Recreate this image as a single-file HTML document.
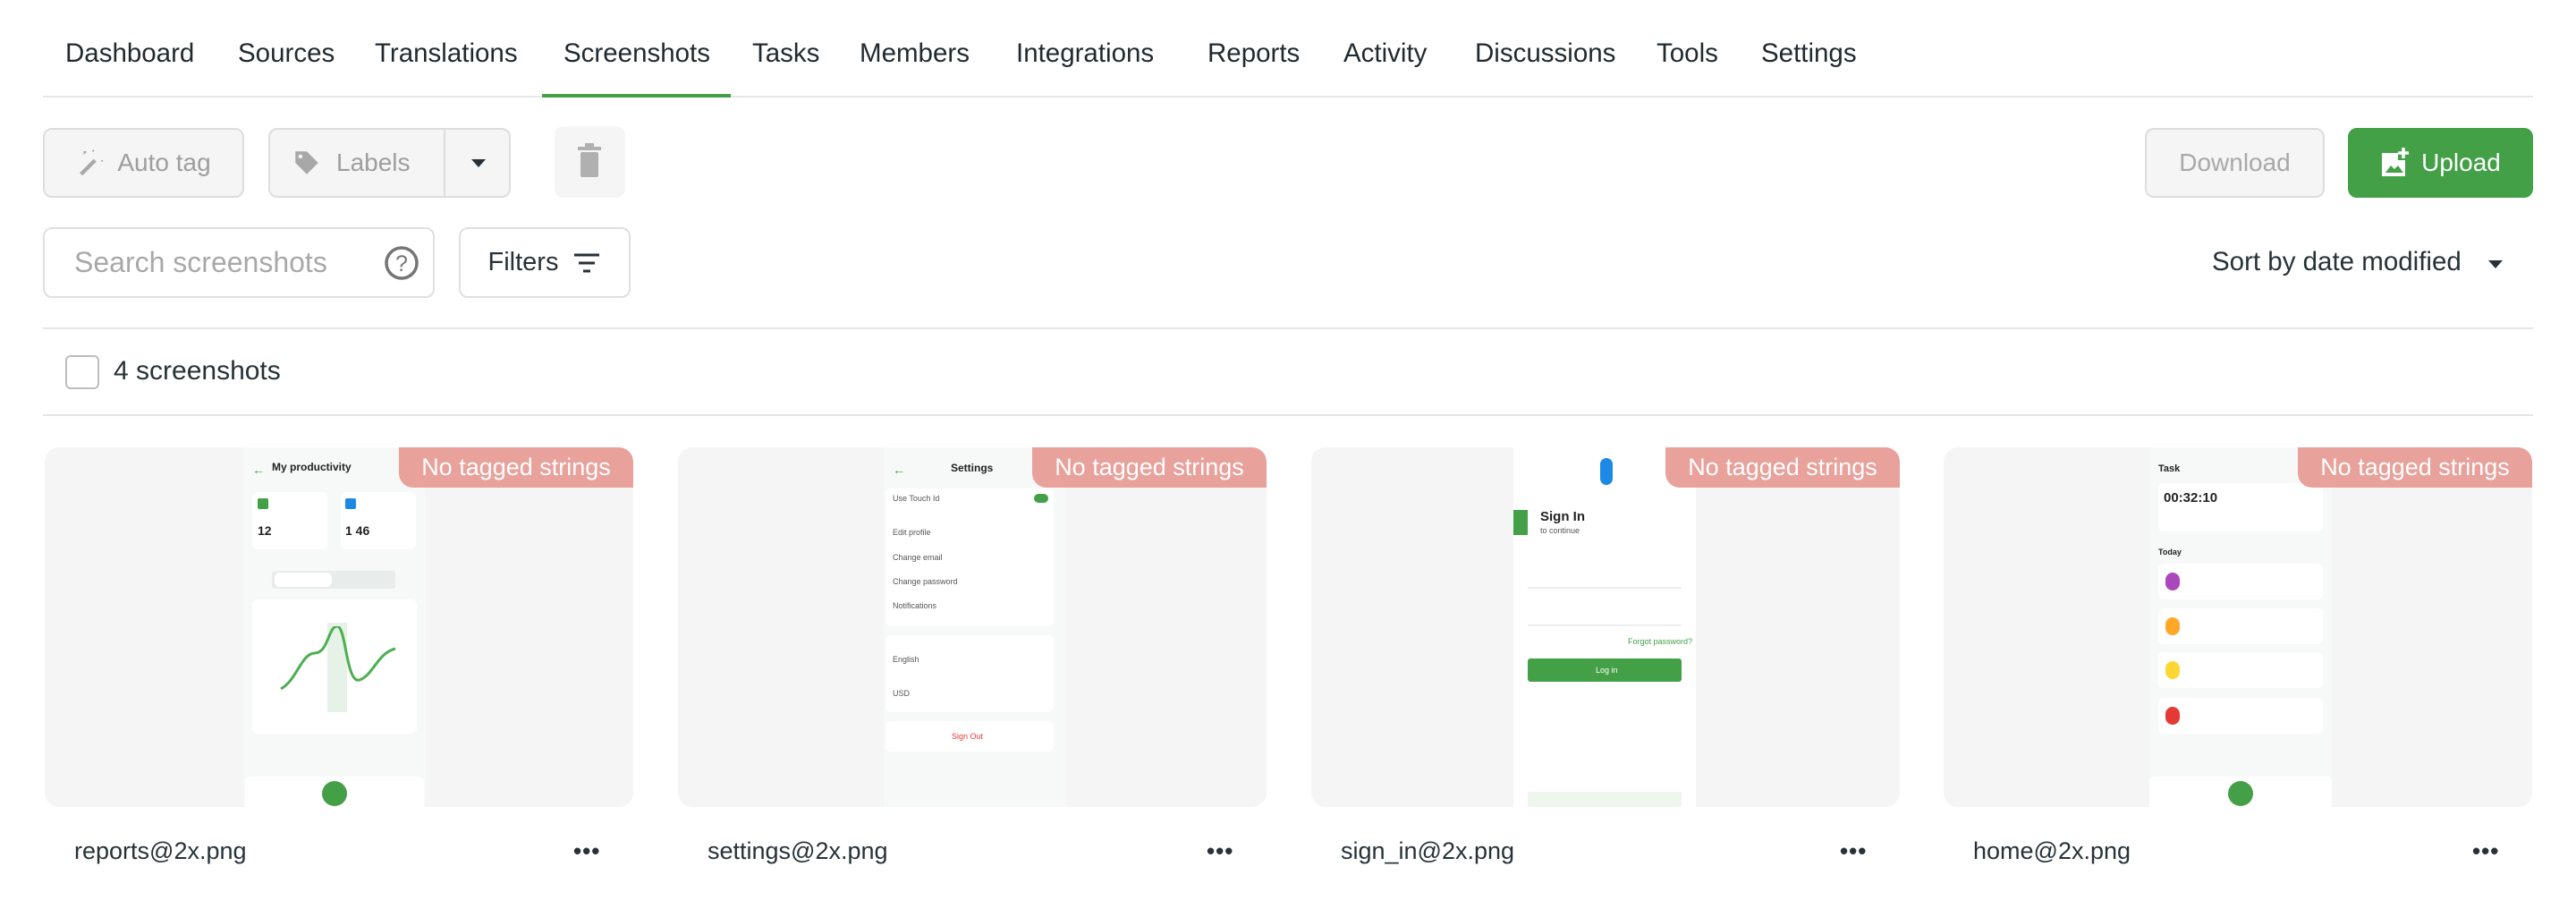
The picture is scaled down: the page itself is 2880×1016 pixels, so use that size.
<!DOCTYPE html>
<html><head><meta charset="utf-8"><style>
*{box-sizing:border-box;margin:0;padding:0}
body{width:2880px;height:1016px;background:#fff;font-family:"Liberation Sans",sans-serif;color:#263238;position:relative;overflow:hidden}
.a{position:absolute}
.nav{top:43px;font-size:29.5px;color:#1f2a30;white-space:nowrap}
.btn{position:absolute;border:2px solid #ddd;border-radius:10px;display:flex;align-items:center;justify-content:center;font-size:28px}
.card{position:absolute;top:500px;width:658px;height:402px;background:#f5f5f5;border-radius:16px;overflow:hidden}
.badge{position:absolute;right:0;top:0;width:262px;height:45px;background:#e8a19b;color:#fff;font-size:27px;line-height:45px;text-align:center;border-radius:0 16px 0 16px}
.phone{position:absolute;top:0;left:225px;width:204px;height:402px;background:#f7f8f8}
.fn{position:absolute;top:936px;font-size:27px;color:#263238}
.dots{position:absolute;top:936px;font-size:26px;font-weight:bold;letter-spacing:1px;color:#263238}
.w{position:absolute;background:#fff;border-radius:6px}
.t{position:absolute;font-size:9px;color:#555;white-space:nowrap}
</style></head><body>
<div class="a nav" style="left:73px">Dashboard</div>
<div class="a nav" style="left:266px">Sources</div>
<div class="a nav" style="left:419px">Translations</div>
<div class="a nav" style="left:630px">Screenshots</div>
<div class="a nav" style="left:841px">Tasks</div>
<div class="a nav" style="left:961px">Members</div>
<div class="a nav" style="left:1136px">Integrations</div>
<div class="a nav" style="left:1350px">Reports</div>
<div class="a nav" style="left:1502px">Activity</div>
<div class="a nav" style="left:1649px">Discussions</div>
<div class="a nav" style="left:1852px">Tools</div>
<div class="a nav" style="left:1969px">Settings</div>
<div class="a" style="left:48px;top:107px;width:2784px;height:2px;background:#e6e6e6"></div>
<div class="a" style="left:606px;top:105px;width:211px;height:4px;background:#43a047"></div>

<div class="btn" style="left:48px;top:143px;width:225px;height:78px;background:#f5f5f5;color:#9e9e9e">
<svg width="34" height="34" viewBox="0 0 24 24" style="margin-right:12px"><path d="M4 21L15 10" stroke="#a8a8a8" stroke-width="3"/><path d="M6 3l1 1M8 3L6 5M13 2l1 1M14 2l-1 1M20 10l1 1M21 10l-1 1" stroke="#aaa" stroke-width="1.2"/></svg>Auto tag</div>
<div class="btn" style="left:300px;top:143px;width:271px;height:78px;background:#f5f5f5;color:#9e9e9e;justify-content:flex-start;padding-left:24px">
<svg width="34" height="34" viewBox="0 0 24 24" style="margin-right:16px"><path d="M3 3h9l9 9-9 9-9-9z" fill="#a8a8a8"/><circle cx="7" cy="7" r="1.6" fill="#f5f5f5"/></svg>Labels
<div class="a" style="left:194px;top:0;width:2px;height:74px;background:#ddd"></div>
<div class="a" style="left:225px;top:33px;width:0;height:0;border-left:8px solid transparent;border-right:8px solid transparent;border-top:9px solid #263238"></div></div>
<div class="a" style="left:620px;top:141px;width:79px;height:80px;background:#f5f5f5;border-radius:10px"></div>
<svg class="a" style="left:644px;top:160px" width="30" height="40" viewBox="0 0 15 20"><rect x="1" y="2" width="13" height="2" fill="#b0b0b0"/><rect x="5" y="0" width="5" height="2" fill="#b0b0b0"/><rect x="2.5" y="5" width="10" height="14" rx="1" fill="#b0b0b0"/></svg>

<div class="btn" style="left:2398px;top:143px;width:201px;height:78px;background:#f5f5f5;color:#a8a8a8">Download</div>
<div class="btn" style="left:2625px;top:143px;width:207px;height:78px;background:#43a047;border-color:#43a047;color:#fff">
<svg width="32" height="34" viewBox="0 0 16 17" style="margin-right:14px"><path d="M1 3h9v4h4v9H1z" fill="#fff"/><path d="M3 14l3-4 2 2 2-2 3 4z" fill="#43a047"/><path d="M13 0v6M10 3h6" stroke="#fff" stroke-width="1.8"/></svg>Upload</div>

<div class="btn" style="left:48px;top:254px;width:438px;height:79px;justify-content:flex-start;padding-left:33px;color:#a8a8a8;border-color:#e0e0e0;font-size:32px">Search screenshots
<svg class="a" style="left:379px;top:18px" width="40" height="40" viewBox="0 0 40 40"><circle cx="20" cy="20" r="17" fill="none" stroke="#757575" stroke-width="3.5"/><text x="20" y="29" font-size="25" text-anchor="middle" fill="#757575" font-family="Liberation Sans">?</text></svg></div>
<div class="btn" style="left:513px;top:254px;width:192px;height:79px;color:#263238;border-color:#e0e0e0;font-size:29px">Filters
<svg width="32" height="24" viewBox="0 0 32 24" style="margin-left:16px"><path d="M2 3h28M7 12h18M12 21h8" stroke="#263238" stroke-width="3"/></svg></div>
<div class="a" style="left:2473px;top:276px;font-size:29.5px">Sort by date modified</div>
<div class="a" style="left:2782px;top:291px;border-left:8px solid transparent;border-right:8px solid transparent;border-top:9px solid #263238"></div>

<div class="a" style="left:48px;top:366px;width:2784px;height:2px;background:#e6e6e6"></div>
<div class="a" style="left:73px;top:397px;width:38px;height:38px;border:2px solid #bdbdbd;border-radius:6px"></div>
<div class="a" style="left:127px;top:398px;font-size:30px">4 screenshots</div>
<div class="a" style="left:48px;top:463px;width:2784px;height:2px;background:#e6e6e6"></div>

<!-- card 1 -->
<div class="card" style="left:50px"><div class="phone" style="left:222px">
<div class="t" style="left:10px;top:17px;color:#43a047;font-size:14px">←</div>
<div class="t" style="left:32px;top:15px;font-size:12px;color:#222;font-weight:bold">My productivity</div>
<div class="w" style="left:10px;top:50px;width:84px;height:64px"></div><div class="w" style="left:109px;top:50px;width:84px;height:64px"></div>
<div class="a" style="left:16px;top:57px;width:12px;height:12px;background:#43a047;border-radius:2px"></div>
<div class="a" style="left:114px;top:57px;width:12px;height:12px;background:#1e88e5;border-radius:2px"></div>
<div class="t" style="left:16px;top:85px;font-size:14px;color:#222;font-weight:bold">12</div>
<div class="t" style="left:114px;top:85px;font-size:14px;color:#222;font-weight:bold">1 46</div>
<div class="a" style="left:32px;top:138px;width:138px;height:20px;background:#e8ecea;border-radius:3px"></div>
<div class="w" style="left:35px;top:140px;width:64px;height:16px"></div>
<div class="w" style="left:10px;top:170px;width:184px;height:150px"></div>
<div class="a" style="left:94px;top:196px;width:22px;height:100px;background:#e6f2e7"></div>
<svg class="a" style="left:40px;top:200px" width="140" height="80"><path d="M2 70C20 60 25 30 40 30S55 0 65 0 75 65 90 60 110 30 130 25" stroke="#4caf50" stroke-width="3" fill="none"/></svg>
<div class="w" style="left:2px;top:368px;width:200px;height:40px"></div>
<div class="a" style="left:88px;top:373px;width:28px;height:28px;background:#43a047;border-radius:50%"></div>
</div><div class="badge">No tagged strings</div></div>
<div class="fn" style="left:83px">reports@2x.png</div><div class="dots" style="left:641px">•••</div>

<!-- card 2 -->
<div class="card" style="left:758px"><div class="phone" style="left:230px">
<div class="t" style="left:10px;top:17px;color:#43a047;font-size:14px">←</div>
<div class="t" style="left:75px;top:16px;font-size:12px;color:#222;font-weight:bold">Settings</div>
<div class="w" style="left:2px;top:46px;width:188px;height:154px"></div>
<div class="a" style="left:168px;top:52px;width:16px;height:10px;background:#43a047;border-radius:5px"></div>
<div class="t" style="left:10px;top:52px">Use Touch Id</div>
<div class="t" style="left:10px;top:90px">Edit profile</div>
<div class="t" style="left:10px;top:118px">Change email</div>
<div class="t" style="left:10px;top:145px">Change password</div>
<div class="t" style="left:10px;top:172px">Notifications</div>
<div class="w" style="left:2px;top:210px;width:188px;height:86px"></div>
<div class="t" style="left:10px;top:232px">English</div><div class="t" style="left:10px;top:270px">USD</div>
<div class="w" style="left:2px;top:306px;width:188px;height:34px"></div>
<div class="t" style="left:76px;top:318px;color:#e53935">Sign Out</div>
</div><div class="badge">No tagged strings</div></div>
<div class="fn" style="left:791px">settings@2x.png</div><div class="dots" style="left:1349px">•••</div>

<!-- card 3 -->
<div class="card" style="left:1466px"><div class="phone" style="left:226px;background:#fff">
<div class="a" style="left:97px;top:12px;width:14px;height:30px;border-radius:7px;background:#1e88e5"></div>
<div class="a" style="left:0;top:70px;width:16px;height:28px;background:#43a047"></div>
<div class="t" style="left:30px;top:69px;font-size:15px;color:#222;font-weight:bold">Sign In</div>
<div class="t" style="left:30px;top:88px;font-size:9px">to continue</div>
<div class="a" style="left:16px;top:156px;width:172px;height:2px;background:#eee"></div>
<div class="a" style="left:16px;top:198px;width:172px;height:2px;background:#eee"></div>
<div class="t" style="left:128px;top:212px;color:#43a047">Forgot password?</div>
<div class="a" style="left:16px;top:236px;width:172px;height:26px;background:#43a047;border-radius:3px"></div>
<div class="t" style="left:92px;top:244px;color:#fff">Log in</div>
<div class="a" style="left:16px;top:385px;width:172px;height:20px;background:#eef6ee"></div>
</div><div class="badge">No tagged strings</div></div>
<div class="fn" style="left:1499px">sign_in@2x.png</div><div class="dots" style="left:2057px">•••</div>

<!-- card 4 -->
<div class="card" style="left:2173px"><div class="phone" style="left:230px">
<div class="t" style="left:10px;top:18px;font-size:11px;color:#222;font-weight:bold">Task</div>
<div class="w" style="left:10px;top:40px;width:184px;height:54px"></div>
<div class="t" style="left:16px;top:48px;font-size:15px;color:#222;font-weight:bold">00:32:10</div>
<div class="t" style="left:10px;top:112px;font-size:9px;color:#222;font-weight:bold">Today</div>
<div class="w" style="left:10px;top:130px;width:184px;height:40px"></div><div class="a" style="left:18px;top:140px;width:16px;height:20px;border-radius:8px;background:#ab47bc"></div>
<div class="w" style="left:10px;top:180px;width:184px;height:40px"></div><div class="a" style="left:18px;top:190px;width:16px;height:20px;border-radius:8px;background:#ffa726"></div>
<div class="w" style="left:10px;top:229px;width:184px;height:40px"></div><div class="a" style="left:18px;top:239px;width:16px;height:20px;border-radius:8px;background:#fdd835"></div>
<div class="w" style="left:10px;top:280px;width:184px;height:40px"></div><div class="a" style="left:18px;top:290px;width:16px;height:20px;border-radius:8px;background:#e53935"></div>
<div class="w" style="left:0;top:368px;width:204px;height:40px"></div>
<div class="a" style="left:88px;top:373px;width:28px;height:28px;background:#43a047;border-radius:50%"></div>
</div><div class="badge">No tagged strings</div></div>
<div class="fn" style="left:2206px">home@2x.png</div><div class="dots" style="left:2764px">•••</div>
</body></html>
